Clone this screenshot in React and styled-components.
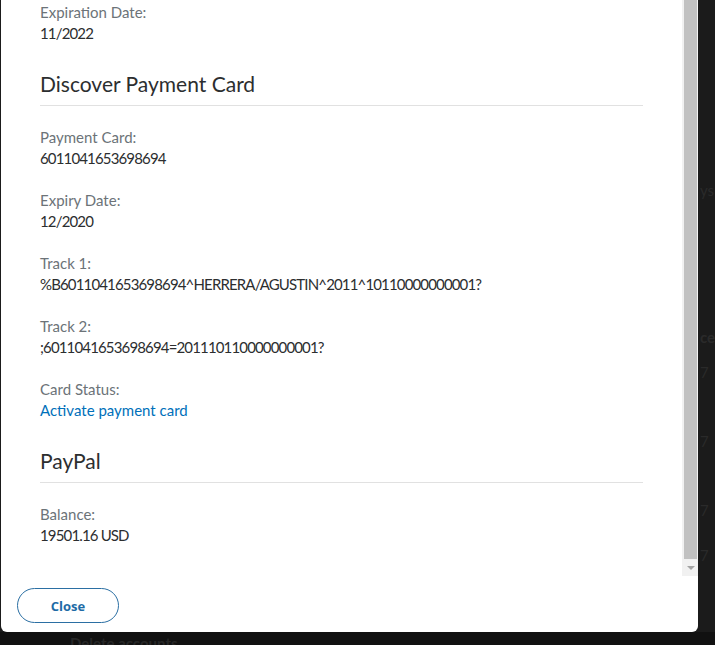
import React from "react";
import styled, { createGlobalStyle } from "styled-components";

const GlobalStyle = createGlobalStyle`
  html, body {
    margin: 0;
    padding: 0;
    background: #1b1b1b;
    font-family: Lato, "Noto Sans", Arial, sans-serif;
    overflow: hidden;
  }
`;

const Page = styled.div`
  width: 715px;
  height: 645px;
  display: flex;
  flex-direction: column;
  overflow: hidden;
`;

const TopRow = styled.div`
  display: flex;
  padding-left: 1px;
  height: 632px;
`;

const Modal = styled.div`
  flex: 0 0 697px;
  height: 632px;
  background: #fff;
  border-radius: 0 0 6px 6px;
  display: flex;
  flex-direction: column;
  overflow: hidden;
`;

const BodyRow = styled.div`
  display: flex;
  height: 576px;
`;

const Content = styled.div`
  flex: 1;
  display: flex;
  flex-direction: column;
  padding: 2px 39px 0 39px;
  overflow: hidden;
`;

const Field = styled.div`
  margin-bottom: 21px;
  font-size: 15px;
  line-height: 21px;
`;

const Label = styled.div`
  color: #6c7378;
`;

const Value = styled.div`
  color: #2c2e2f;
  letter-spacing: -0.85px;
`;

const Link = styled.a`
  color: #0070ba;
  text-decoration: none;
  cursor: pointer;
`;

const SectionTitle = styled.h3`
  margin: 5px 0 21px;
  padding-bottom: 7px;
  border-bottom: 1px solid #e1e1e1;
  font-size: 21px;
  line-height: 28px;
  font-weight: 400;
  color: #2c2e2f;
`;

const ScrollTrack = styled.div`
  width: 16px;
  background: #f1f1f1;
  display: flex;
  flex-direction: column;
`;

const ScrollThumb = styled.div`
  flex: 1;
  margin: 0 1px 0 2px;
  background: #c1c1c1;
`;

const ScrollButton = styled.div`
  height: 17px;
  display: flex;
  align-items: center;
  justify-content: center;
  padding-left: 1px;

  &::after {
    content: "";
    border-left: 4px solid transparent;
    border-right: 4px solid transparent;
    border-top: 4px solid #a3a3a3;
  }
`;

const Footer = styled.div`
  padding: 12px 16px 9px;
`;

const CloseButton = styled.button`
  width: 102px;
  height: 35px;
  border: 1px solid #2b6fa3;
  border-radius: 18px;
  background: #fff;
  color: #1e6ba6;
  font-family: "Open Sans", Lato, sans-serif;
  font-weight: 700;
  font-size: 13px;
  cursor: pointer;
`;

const BehindStrip = styled.div`
  flex: 1;
  min-width: 0;
  overflow: hidden;
  display: flex;
  flex-direction: column;
  padding-left: 2px;
`;

const BehindText = styled.div`
  margin-top: ${(p) => p.$mt}px;
  height: 20px;
  line-height: 20px;
  font-size: 15px;
  font-weight: ${(p) => (p.$bold ? 700 : 400)};
  color: #2a2a2a;
  white-space: nowrap;
`;

const BottomStrip = styled.div`
  height: 13px;
  background: #111;
  padding-left: 70px;
  overflow: hidden;
`;

const BottomText = styled.div`
  font-size: 15px;
  line-height: 20px;
  margin-top: 1px;
  font-weight: 700;
  color: #262626;
`;

const discoverFields = [
  { label: "Payment Card:", value: "6011041653698694" },
  { label: "Expiry Date:", value: "12/2020" },
  {
    label: "Track 1:",
    value: "%B6011041653698694^HERRERA/AGUSTIN^2011^10110000000001?",
  },
  { label: "Track 2:", value: ";6011041653698694=201110110000000001?" },
];

function App() {
  return (
    <>
      <GlobalStyle />
      <Page>
        <TopRow>
          <Modal>
            <BodyRow>
              <Content>
                <Field>
                  <Label>Expiration Date:</Label>
                  <Value>11/2022</Value>
                </Field>

                <SectionTitle>Discover Payment Card</SectionTitle>
                {discoverFields.map((f) => (
                  <Field key={f.label}>
                    <Label>{f.label}</Label>
                    <Value>{f.value}</Value>
                  </Field>
                ))}
                <Field>
                  <Label>Card Status:</Label>
                  <Link>Activate payment card</Link>
                </Field>

                <SectionTitle>PayPal</SectionTitle>
                <Field>
                  <Label>Balance:</Label>
                  <Value>19501.16 USD</Value>
                </Field>
              </Content>
              <ScrollTrack>
                <ScrollThumb />
                <ScrollButton />
              </ScrollTrack>
            </BodyRow>
            <Footer>
              <CloseButton>Close</CloseButton>
            </Footer>
          </Modal>
          <BehindStrip>
            <BehindText $mt={180}>ys</BehindText>
            <BehindText $mt={127} $bold>ce</BehindText>
            <BehindText $mt={15}>7</BehindText>
            <BehindText $mt={49}>7</BehindText>
            <BehindText $mt={49}>7</BehindText>
            <BehindText $mt={25}>7</BehindText>
          </BehindStrip>
        </TopRow>
        <BottomStrip>
          <BottomText>Delete accounts</BottomText>
        </BottomStrip>
      </Page>
    </>
  );
}

export default App;
